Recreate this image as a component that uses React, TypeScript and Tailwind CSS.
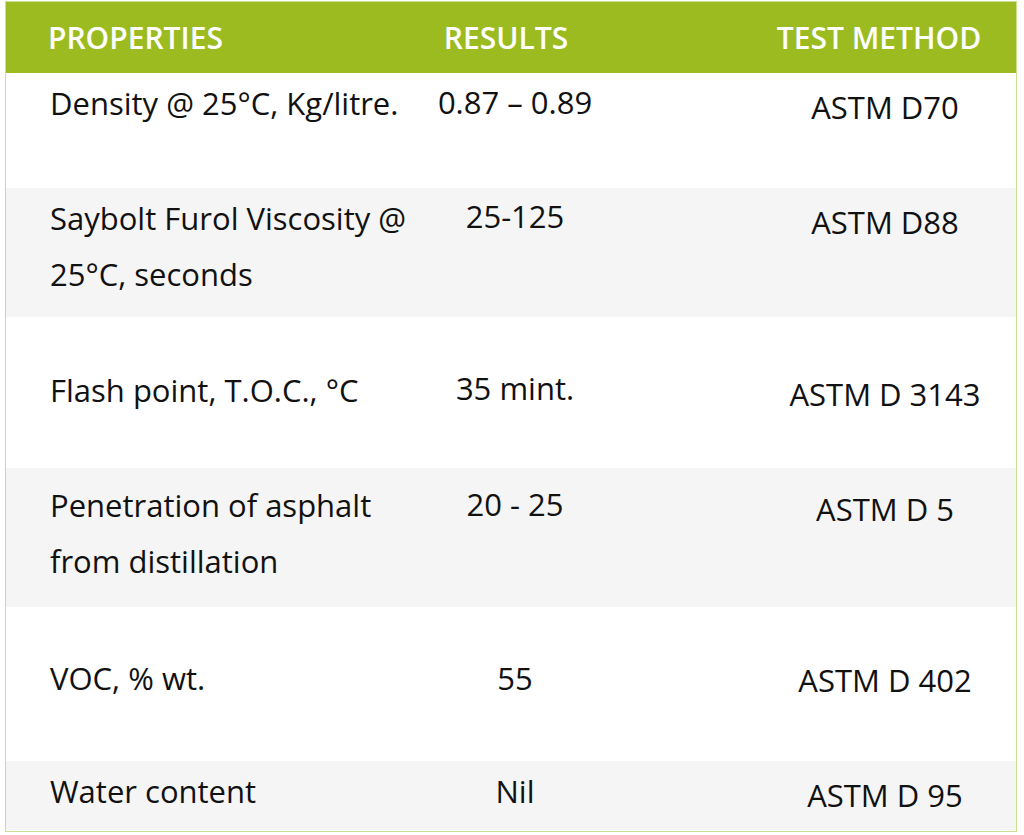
import React from "react";

type Row = {
  h: string;
  bg: string;
  c1: React.ReactNode;
  c2: string;
  c3: string;
  p1: string;
  p2: string;
  p3: string;
};

const rows: Row[] = [
  { h: "h-[115px]", bg: "bg-white", c1: "Density @ 25°C, Kg/litre.", c2: "0.87 – 0.89", c3: "ASTM D70", p1: "pt-[2px]", p2: "pt-[1px]", p3: "pt-[6px]" },
  { h: "h-[129px]", bg: "bg-[#f5f5f5]", c1: <>Saybolt Furol Viscosity @<br />25°C, seconds</>, c2: "25-125", c3: "ASTM D88", p1: "pt-[2px]", p2: "pt-0", p3: "pt-[6px]" },
  { h: "h-[151px]", bg: "bg-white", c1: "Flash point, T.O.C., °C", c2: "35 mint.", c3: "ASTM D 3143", p1: "pt-[45px]", p2: "pt-[43px]", p3: "pt-[49px]" },
  { h: "h-[139px]", bg: "bg-[#f5f5f5]", c1: <>Penetration of asphalt<br />from distillation</>, c2: "20 - 25", c3: "ASTM D 5", p1: "pt-[9px]", p2: "pt-[8px]", p3: "pt-[13px]" },
  { h: "h-[154px]", bg: "bg-white", c1: "VOC, % wt.", c2: "55", c3: "ASTM D 402", p1: "pt-[43px]", p2: "pt-[43px]", p3: "pt-[45px]" },
  { h: "h-[69px]", bg: "bg-[#f5f5f5]", c1: "Water content", c2: "Nil", c3: "ASTM D 95", p1: "pt-[2px]", p2: "pt-[2px]", p3: "pt-[6px]" },
];

export default function App() {
  return (
    <div
      className="w-[1024px] h-[835px] bg-white pl-[5px] pt-[1px] text-[#111111]"
      style={{ fontFamily: '"Open Sans", "Noto Sans", sans-serif' }}
    >
      <div className="w-[1012px] h-[831px] border border-[#c9e08f] flex flex-col">
        <div className="h-[71px] bg-[#9bbb21] flex text-white text-[30px] font-semibold leading-[71px] whitespace-nowrap">
          <div className="w-[414px] pl-[42px]">PROPERTIES</div>
          <div className="w-[190px] text-center pr-[18px]">RESULTS</div>
          <div className="w-[144px]" />
          <div className="w-[262px] text-center pr-[12px]">TEST METHOD</div>
        </div>
        {rows.map((r, i) => (
          <div key={i} className={`${r.h} ${r.bg} flex text-[31px] leading-[56px] whitespace-nowrap`}>
            <div className={`w-[414px] pl-[44px] ${r.p1}`}>{r.c1}</div>
            <div className={`w-[190px] text-center ${r.p2}`}>{r.c2}</div>
            <div className="w-[144px]" />
            <div className={`w-[262px] text-center ${r.p3}`}>{r.c3}</div>
          </div>
        ))}
      </div>
    </div>
  );
}
